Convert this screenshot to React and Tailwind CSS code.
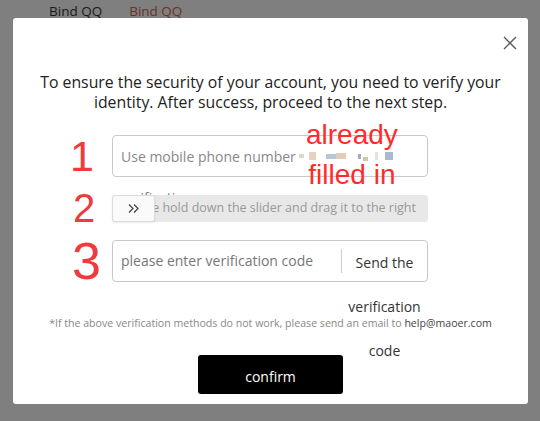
import React from "react";

export default function App() {
  return (
    <div className="relative w-[540px] h-[421px] overflow-hidden bg-[#7f7f7f] font-['Open_Sans','Liberation_Sans',Arial,sans-serif]">
      {/* page behind overlay */}
      <div className="flex gap-[27px] pl-[49px] pt-[1px] text-[13.5px] leading-[20px]">
        <span className="text-[#1a1a1a]">Bind QQ</span>
        <span className="text-[#6a3328]">Bind QQ</span>
      </div>

      {/* modal */}
      <div className="absolute left-[13px] top-[18px] w-[515px] h-[386px] rounded-[3px] bg-white">
        <div className="flex justify-end pt-[18px] pr-[11px]">
          <svg width="14" height="14" viewBox="0 0 14 14" fill="none" stroke="#5a5a5a" strokeWidth="1.4">
            <path d="M1 1L13 13M13 1L1 13" />
          </svg>
        </div>

        <p className="mt-[22px] text-center text-[15.8px] leading-[20px] text-[#222]">
          To ensure the security of your account, you need to verify your
          <br />
          identity. After success, proceed to the next step.
        </p>

        <div className="mt-[23px] flex flex-col gap-[18px]">
          {/* row 1 */}
          <div className="relative flex items-center">
            <div className="w-[99px] shrink-0 pl-[57px] font-['Liberation_Sans',Arial,sans-serif] text-[43px] leading-[42px] text-[#ef3b3b]">1</div>
            <div className="flex h-[42px] w-[316px] items-center rounded-[4px] border border-[#c8c8c8] pl-[8px] text-[14px] text-[#888]">
              <span>Use mobile phone number</span>
              <span className="ml-[3px] flex h-[8px] items-center">
                <span className="h-[4px] w-[5px] bg-[#ddd6cc]" />
                <span className="ml-[5px] h-[8px] w-[7px] bg-[#e6d2be]" />
                <span className="ml-[10px] h-[5px] w-[10px] bg-[#b9c6d6]" />
                <span className="h-[6px] w-[10px] bg-[#e4cdb6]" />
                <span className="ml-[12px] h-[5px] w-[3px] bg-[#a8adb4]" />
                <span className="ml-[2px] mt-[5px] h-[4px] w-[5px] bg-[#d8c2a8]" />
                <span className="ml-[7px] h-[8px] w-[3px] bg-[#e8e2dc]" />
                <span className="ml-[7px] h-[8px] w-[8px] bg-[#a9bad0]" />
              </span>
            </div>
            <div className="absolute left-[293px] top-[-20px] text-center font-['Liberation_Sans',Arial,sans-serif] text-[28px] leading-[40px] text-[#ff2b2b]">
              already
              <br />
              filled in
            </div>
          </div>

          {/* row 2 */}
          <div className="relative flex items-center">
            <div className="w-[99px] shrink-0 pl-[60px] font-['Liberation_Sans',Arial,sans-serif] text-[40px] leading-[27px] text-[#ef3b3b]">2</div>
            <div className="absolute left-[107px] top-[-7px] text-[14px] leading-[20px] text-[#777]">verification</div>
            <div className="relative flex h-[27px] w-[316px] items-center justify-end overflow-hidden whitespace-nowrap rounded-[3px] bg-[#e8e8e8] pr-[12px] text-[12.5px] text-[#999]">
              <span>Please hold down the slider and drag it to the right</span>
            </div>
            <div className="absolute left-[99px] top-0 flex h-[27px] w-[43px] items-center justify-center rounded-[3px] border border-[#dcdcdc] bg-[#fafafa] shadow-[0_1px_2px_rgba(0,0,0,0.08)]">
              <svg width="11" height="9" viewBox="0 0 11 9" fill="none" stroke="#444" strokeWidth="1.3">
                <path d="M1 0.5L5 4.5L1 8.5M6 0.5L10 4.5L6 8.5" />
              </svg>
            </div>
          </div>

          {/* row 3 */}
          <div className="flex items-center">
            <div className="w-[99px] shrink-0 pl-[59px] font-['Liberation_Sans',Arial,sans-serif] text-[52px] leading-[42px] text-[#ef3b3b]">3</div>
            <div className="flex h-[42px] w-[316px] items-start rounded-[4px] border border-[#c8c8c8] text-[14px]">
              <span className="flex-1 pl-[8px] leading-[40px] text-[#777]">please enter verification code</span>
              <div className="mt-[8px] h-[24px] w-px bg-[#ccc]" />
              <div className="w-[85px] text-center leading-[44px] text-[#333]">Send the verification code</div>
            </div>
          </div>
        </div>

        <p className="mt-[33px] text-center text-[10.6px] leading-[16px] text-[#888]">
          *If the above verification methods do not work, please send an email to <span className="text-[#444]">help@maoer.com</span>
        </p>

        <div className="mt-[24px] flex justify-center">
          <div className="flex h-[39px] w-[145px] items-center justify-center rounded-[3px] bg-black pt-[3px] text-[14px] text-white">
            confirm
          </div>
        </div>
      </div>
    </div>
  );
}
